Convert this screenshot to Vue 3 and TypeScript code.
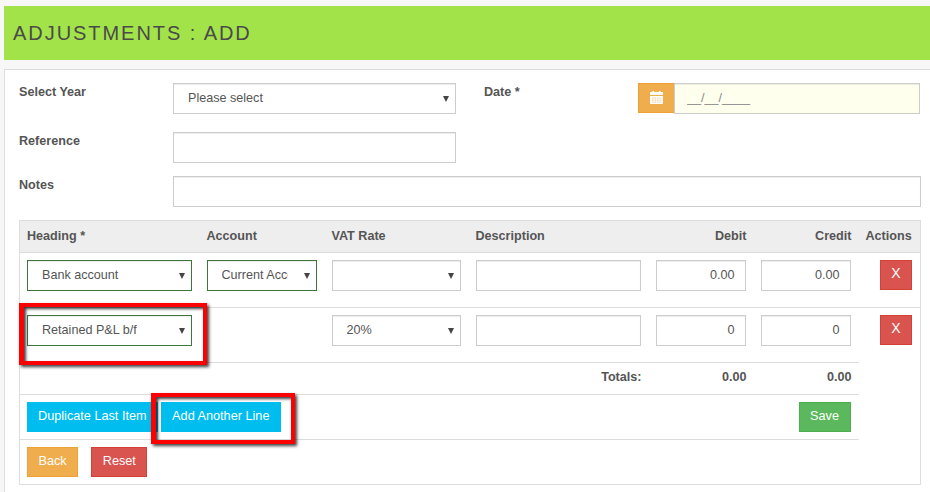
<script setup lang="ts">
interface Line {
  heading: string
  account: string | null
  vat: string
  debit: string
  credit: string
}
const lines: Line[] = [
  { heading: 'Bank account', account: 'Current Account', vat: '', debit: '0.00', credit: '0.00' },
  { heading: 'Retained P&L b/f', account: null, vat: '20%', debit: '0', credit: '0' },
]
</script>

<template>
  <div class="page">
    <h1 class="title">ADJUSTMENTS : ADD</h1>
    <div class="card">
      <div class="form-row first">
        <label class="label">Select Year</label>
        <select class="field pick year"><option>Please select</option></select>
        <label class="label date-label">Date *</label>
        <div class="date-group">
          <span class="addon">
            <svg width="13" height="14" viewBox="0 0 13 14">
              <path fill="#fff" d="M1 2h1.500V1h1.600v1h4.800V1h1.600v1H12a1 1 0 0 1 1 1v2H0V3a1 1 0 0 1 1-1z" />
              <path fill="#fff" d="M0 6h13v7a1 1 0 0 1-1 1H1a1 1 0 0 1-1-1z" />
              <path fill="#f0ad4e" opacity=".55" d="M2 7.500h1.500v1.200H2zM4.500 7.500H6v1.200H4.500zM7 7.500h1.500v1.200H7zM9.500 7.500H11v1.200H9.500zM2 9.500h1.500v1.200H2zM4.500 9.500H6v1.200H4.500zM7 9.500h1.500v1.200H7zM9.500 9.500H11v1.200H9.500zM2 11.500h1.500v1.200H2zM4.500 11.500H6v1.200H4.500zM7 11.500h1.500v1.200H7zM9.500 11.500H11v1.200H9.500z" />
            </svg>
          </span>
          <input class="field date" value="__/__/____" />
        </div>
      </div>
      <div class="form-row second">
        <label class="label">Reference</label>
        <input class="field year" />
      </div>
      <div class="form-row third">
        <label class="label">Notes</label>
        <input class="field notes" />
      </div>

      <table class="grid">
        <colgroup>
          <col class="c1" /><col class="c2" /><col class="c3" /><col class="c4" /><col class="c5" /><col class="c6" /><col class="c7" />
        </colgroup>
        <thead>
          <tr>
            <th>Heading *</th>
            <th>Account</th>
            <th>VAT Rate</th>
            <th>Description</th>
            <th class="num">Debit</th>
            <th class="num">Credit</th>
            <th class="actions-head">Actions</th>
          </tr>
        </thead>
        <tbody>
          <tr v-for="line in lines" :key="line.heading" class="line">
            <td><select class="field pick ok"><option>{{ line.heading }}</option></select></td>
            <td>
              <select v-if="line.account" class="field pick ok"><option>{{ line.account }}</option></select>
            </td>
            <td><select class="field pick"><option>{{ line.vat }}</option></select></td>
            <td><input class="field" /></td>
            <td><input class="field right" :value="line.debit" /></td>
            <td><input class="field right" :value="line.credit" /></td>
            <td class="x-cell"><button class="btn danger x">X</button></td>
          </tr>
          <tr class="totals">
            <td colspan="4" class="num">Totals:</td>
            <td class="num">0.00</td>
            <td class="num">0.00</td>
            <td class="blank"></td>
          </tr>
          <tr class="bar">
            <td colspan="6">
              <div class="bar-inner">
                <button class="btn info dup">Duplicate Last Item</button>
                <button class="btn info">Add Another Line</button>
                <button class="btn success save">Save</button>
              </div>
            </td>
            <td class="blank"></td>
          </tr>
          <tr class="bar">
            <td colspan="6">
              <div class="bar-inner wide">
                <button class="btn warning">Back</button>
                <button class="btn danger">Reset</button>
              </div>
            </td>
            <td class="blank"></td>
          </tr>
        </tbody>
      </table>
    </div>
    <div class="mark mark-a"></div>
    <div class="mark mark-b"></div>
  </div>
</template>

<style scoped>
.page {
  position: relative;
  height: 492px;
  overflow: hidden;
  padding-top: 6px;
  box-sizing: border-box;
  font-family: "Liberation Sans", Arial, sans-serif;
  font-size: 12.6px;
  color: #555;
}
.title {
  margin: 0 0 9px 4px;
  height: 54px;
  line-height: 54px;
  padding-left: 9px;
  background: #a3e34a;
  font-size: 20px;
  font-weight: 400;
  letter-spacing: 1.95px;
  color: #4a4a4a;
}
.card {
  margin-left: 4px;
  height: 423px;
  box-sizing: border-box;
  background: #fff;
  border-top: 1px solid #ddd;
  border-left: 1px solid #ddd;
  padding: 13px 0 0 14px;
}
.form-row {
  display: flex;
  align-items: flex-start;
}
.second { margin-top: 18px; }
.third { margin-top: 13px; margin-bottom: 13px; }
.label {
  width: 154px;
  flex: none;
  font-weight: 700;
  padding-top: 2px;
}
.date-label { margin-left: 28px; }
.field {
  display: block;
  width: 100%;
  height: 31px;
  box-sizing: border-box;
  border: 1px solid #ccc;
  border-radius: 0;
  background-color: #fff;
  padding: 0 12px;
  font: inherit;
  color: #555;
  box-shadow: inset 0 1px 1px rgba(0, 0, 0, 0.075);
  outline: none;
}
.pick {
  appearance: none;
  -webkit-appearance: none;
  padding: 0 28px 2px 14px;
  background-image: url("data:image/svg+xml,%3Csvg xmlns='http://www.w3.org/2000/svg' width='6' height='6'%3E%3Cpath fill='%23444' d='M0 0h6L3 6z'/%3E%3C/svg%3E");
  background-repeat: no-repeat;
  background-position: right 6px top 12px;
}
.year { width: 283px; flex: none; }
.notes { width: 748px; flex: none; }
.date-group { display: flex; width: 282px; flex: none; }
.addon {
  flex: none;
  width: 36px;
  height: 30px;
  box-sizing: border-box;
  display: flex;
  align-items: center;
  justify-content: center;
  background: #f0ad4e;
  border: 1px solid #eea236;
  border-right: 0;
  padding-bottom: 3px;
}
.date { background-color: #ffffee; color: #888; padding-bottom: 2px; }
.grid {
  width: 902px;
  table-layout: fixed;
  border-collapse: collapse;
  border: 1px solid #ddd;
}
.c1 { width: 180px; }
.c2 { width: 125px; }
.c3 { width: 144px; }
.c4 { width: 180px; }
.c5 { width: 105px; }
.c6 { width: 105px; }
.c7 { width: 62px; }
th {
  height: 32px;
  padding: 0 7px 1px 7px;
  box-sizing: border-box;
  background: #eee;
  text-align: left;
  font-weight: 700;
  border-bottom: 1px solid #ddd;
}
td {
  padding: 7px 8px 7px 7px;
  vertical-align: top;
  border-top: 1px solid #ddd;
}
.num { text-align: right; padding-right: 7px; }
.actions-head { padding: 0 0 1px 7px; }
.line td { height: 55px; box-sizing: border-box; }
.line .ok { border-color: #3c763d; }
.right { text-align: right; padding-right: 10px; padding-bottom: 2px; }
.x-cell { text-align: right; }
.totals td {
  height: 32px;
  box-sizing: border-box;
  padding-top: 7px;
  padding-bottom: 0;
  font-weight: 700;
}
td.blank { border-top: 0; }
.bar td { height: 45px; box-sizing: border-box; }
.bar-inner { display: flex; gap: 3px; }
.bar-inner.wide { gap: 13px; }
.save { margin-left: auto; }
.btn {
  height: 30px;
  box-sizing: border-box;
  border: 1px solid transparent;
  border-radius: 0;
  padding: 0 10.5px 3px;
  color: #fff;
  font: inherit;
  font-size: 12.7px;
  white-space: nowrap;
}
.dup { padding: 0 10px 3px; }
.info { background: #00bdef; border-color: #00bdef; }
.success { background: #5cb85c; border-color: #4cae4c; }
.warning { background: #f0ad4e; border-color: #eea236; }
.danger { background: #d9534f; border-color: #d43f3a; }
.x { width: 32px; padding: 0 0 4px; font-size: 14px; }
.mark {
  position: absolute;
  box-sizing: border-box;
  border: 4px solid #f00;
  border-left-width: 5px;
  box-shadow: 2px 2px 3px rgba(0, 0, 0, 0.75), inset 2px 2px 3px rgba(0, 0, 0, 0.75);
}
.mark-a { left: 19px; top: 303px; width: 188px; height: 62px; }
.mark-b { left: 151px; top: 393px; width: 144px; height: 51px; }
</style>

<style>
html, body { background: #f7f7f7; overflow: hidden; }
</style>
